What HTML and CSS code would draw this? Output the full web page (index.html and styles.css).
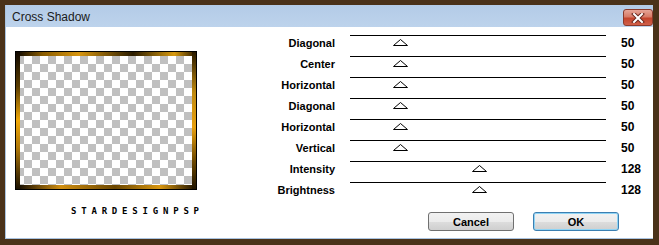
FILE: index.html
```html
<!DOCTYPE html>
<html lang="en">
<head>
    <meta charset="UTF-8">
    <title>Cross Shadow</title>
    <link rel="stylesheet" href="styles.css">
</head>
<body>
    <div class="window">
        <div class="titlebar">
            <span class="title">Cross Shadow</span>
            <button class="close-button" aria-label="Close">
                <svg width="14" height="10" viewBox="0 0 14 10">
                    <path d="M3 1 L11 9 M11 1 L3 9" stroke="#6b2a20" stroke-width="4" stroke-linecap="square"/>
                    <path d="M3 1 L11 9 M11 1 L3 9" stroke="#fff" stroke-width="2" stroke-linecap="square"/>
                </svg>
            </button>
        </div>

        <div class="content">
            <div class="preview-col">
                <div class="preview-frame">
                    <div class="checker"></div>
                </div>
                <p class="logo">STARDESIGNPSP</p>
            </div>

            <div class="controls">
                <div class="sliders">
                    <label>Diagonal</label>
                    <div class="track"><span class="thumb" style="left: calc(50 / 255 * 256px - 7px)"></span></div>
                    <span class="value">50</span>

                    <label>Center</label>
                    <div class="track"><span class="thumb" style="left: calc(50 / 255 * 256px - 7px)"></span></div>
                    <span class="value">50</span>

                    <label>Horizontal</label>
                    <div class="track"><span class="thumb" style="left: calc(50 / 255 * 256px - 7px)"></span></div>
                    <span class="value">50</span>

                    <label>Diagonal</label>
                    <div class="track"><span class="thumb" style="left: calc(50 / 255 * 256px - 7px)"></span></div>
                    <span class="value">50</span>

                    <label>Horizontal</label>
                    <div class="track"><span class="thumb" style="left: calc(50 / 255 * 256px - 7px)"></span></div>
                    <span class="value">50</span>

                    <label>Vertical</label>
                    <div class="track"><span class="thumb" style="left: calc(50 / 255 * 256px - 7px)"></span></div>
                    <span class="value">50</span>

                    <label>Intensity</label>
                    <div class="track"><span class="thumb" style="left: calc(128 / 255 * 256px - 7px)"></span></div>
                    <span class="value">128</span>

                    <label>Brightness</label>
                    <div class="track"><span class="thumb" style="left: calc(128 / 255 * 256px - 7px)"></span></div>
                    <span class="value">128</span>
                </div>

                <div class="buttons">
                    <button class="btn">Cancel</button>
                    <button class="btn btn-default">OK</button>
                </div>
            </div>
        </div>
    </div>
</body>
</html>
```

FILE: styles.css
```css
body {
    margin: 0;
    background-color: #4a3219;
    font-family: 'Liberation Sans', Arial, sans-serif;
    color: #000;
}

.window {
    margin: 5px 6px 6px 5px;
    height: 234px;
    box-sizing: border-box;
    background: white;
    border-left: 1px solid #a9c3e0;
    border-bottom: 1px solid #a9c3e0;
    display: flex;
    flex-direction: column;
}

.titlebar {
    height: 22px;
    display: flex;
    align-items: center;
    justify-content: space-between;
    background: linear-gradient(180deg, #b3cbe7, #bdd3ec);
    padding-left: 6px;
}

.title {
    font-size: 12px;
    color: #1a1a1a;
    padding-top: 1px;
}

.close-button {
    width: 30px;
    height: 17px;
    margin-top: 3px;
    padding: 0;
    border: 1px solid #8a3a2c;
    border-radius: 3px;
    background: linear-gradient(180deg, #e6a597 0%, #d77a66 45%, #c4442c 55%, #d0604a 100%);
    display: flex;
    align-items: center;
    justify-content: center;
}

.content {
    flex: 1;
    display: flex;
}

.preview-col {
    width: 229px;
    padding: 24px 0 0 9px;
    box-sizing: border-box;
}

.preview-frame {
    width: 182px;
    height: 139px;
    box-sizing: border-box;
    border: 1px solid #000;
    padding: 4px;
    background:
        linear-gradient(180deg, #100800 0%, #5a3c00 25%, #f0a808 50%, #b07808 70%, #1a1000 100%) left / 4px 100% no-repeat,
        linear-gradient(180deg, #2a1a00 0%, #c08a10 30%, #e8a010 55%, #6a4600 80%, #201400 100%) right / 4px 100% no-repeat,
        linear-gradient(90deg, #0a0500 0%, #8a5c00 15%, #d89610 35%, #2a1c00 65%, #d89a10 88%, #2a1a00 100%) top / 100% 4px no-repeat,
        linear-gradient(90deg, #0a0500 0%, #d08e10 25%, #6a4600 55%, #d89610 80%, #1a1000 100%) bottom / 100% 4px no-repeat;
}

.checker {
    width: 100%;
    height: 100%;
    background-color: #fff;
    background-image:
        linear-gradient(45deg, #c0c0c0 25%, transparent 25%, transparent 75%, #c0c0c0 75%),
        linear-gradient(45deg, #c0c0c0 25%, transparent 25%, transparent 75%, #c0c0c0 75%);
    background-size: 16px 16px;
    background-position: 4px 0, 12px 8px;
}

.logo {
    margin: 17px 0 0 56px;
    font-family: 'DejaVu Sans Mono', monospace;
    font-size: 9px;
    font-weight: bold;
    letter-spacing: 4.8px;
    line-height: 9px;
}

.controls {
    flex: 1;
    padding-top: 8px;
    display: flex;
    flex-direction: column;
}

.sliders {
    display: grid;
    grid-template-columns: 100px 256px auto;
    grid-auto-rows: 21px;
    column-gap: 15px;
}

.sliders label {
    text-align: right;
    font-size: 11px;
    font-weight: bold;
    line-height: 16px;
}

.track {
    position: relative;
    border-top: 1px solid #000;
}

.thumb {
    position: absolute;
    top: 3px;
    width: 15px;
    height: 7px;
    background: no-repeat url("data:image/svg+xml,%3Csvg xmlns='http://www.w3.org/2000/svg' width='15' height='7'%3E%3Cpolygon points='7.5,0.5 14.5,6.5 0.5,6.5' fill='white' stroke='black' stroke-width='1'/%3E%3C/svg%3E");
}

.value {
    font-size: 12px;
    font-weight: bold;
    line-height: 16px;
}

.buttons {
    display: flex;
    justify-content: flex-end;
    gap: 19px;
    margin-top: 9px;
    padding-right: 34px;
}

.btn {
    width: 86px;
    height: 19px;
    padding: 0;
    font-family: 'Liberation Sans', Arial, sans-serif;
    font-size: 11px;
    font-weight: bold;
    color: #000;
    border: 1px solid #707070;
    border-radius: 3px;
    background: linear-gradient(180deg, #f2f2f2 0%, #ebebeb 50%, #dddddd 50%, #cfcfcf 100%);
}

.btn-default {
    border-color: #3c7fb1;
    box-shadow: inset 0 0 0 1px #8fd4f5;
}
```
